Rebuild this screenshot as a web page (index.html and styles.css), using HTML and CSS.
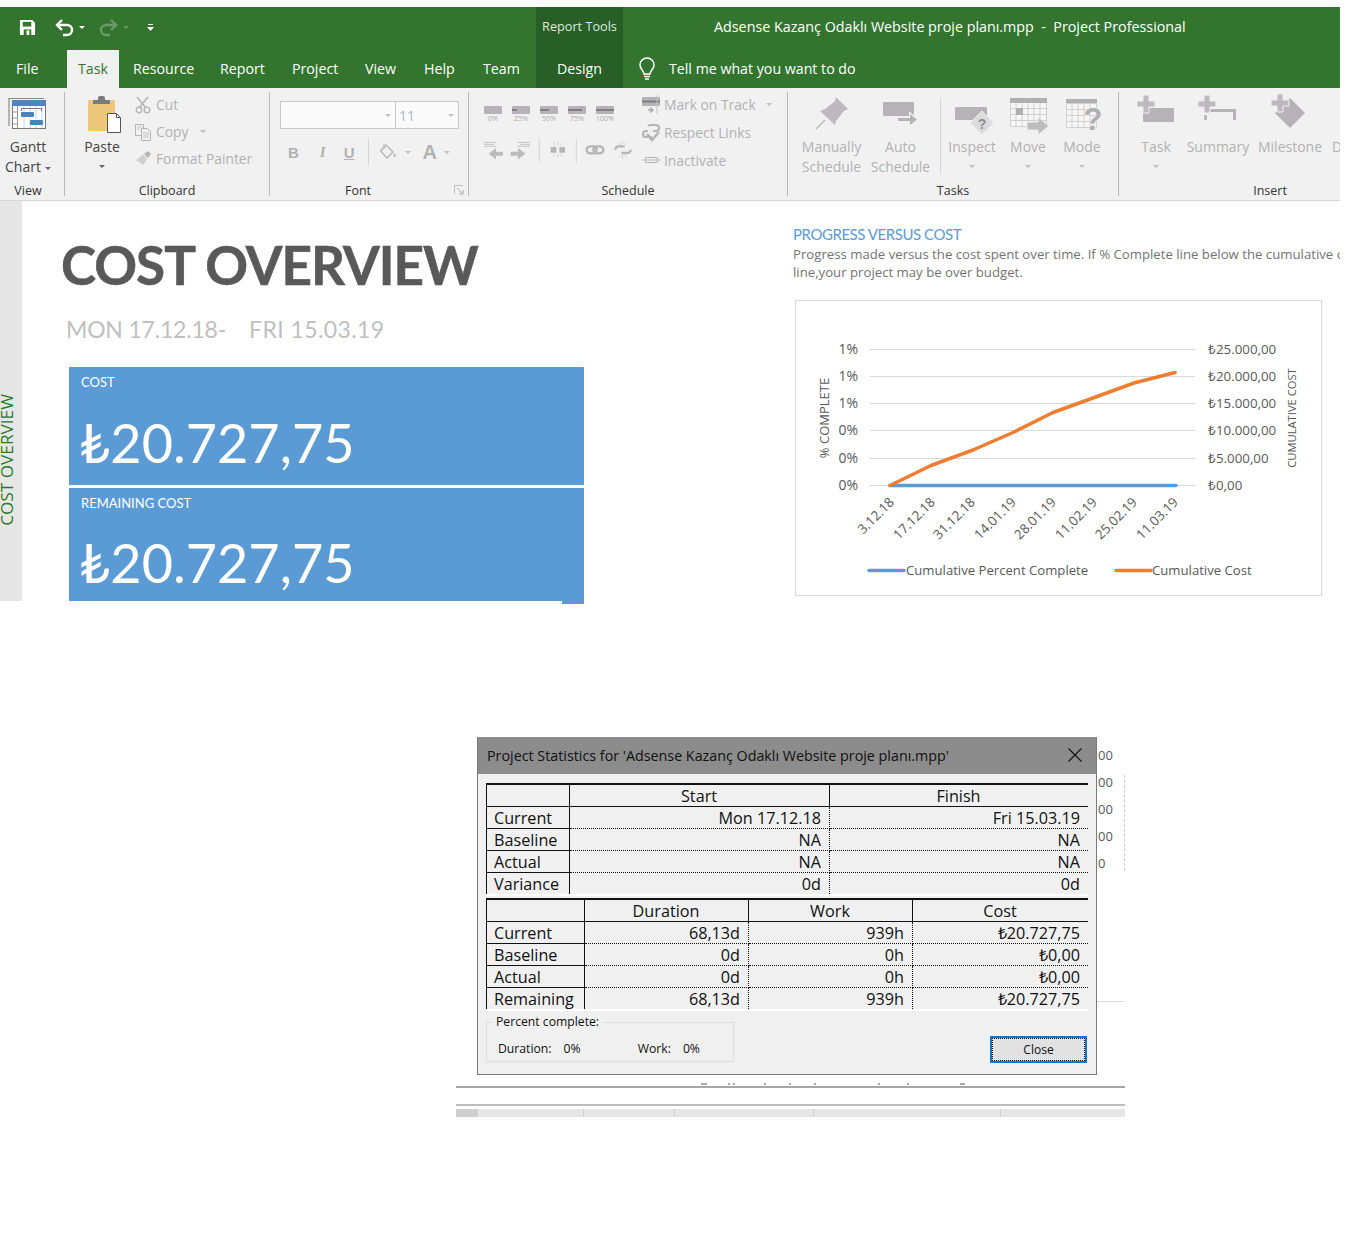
FILE: index.html
```html
<!DOCTYPE html>
<html lang="en">
<head>
  <meta charset="UTF-8">
  <title>Project Professional</title>
  <link rel="stylesheet" href="styles.css">
</head>
<body>

  <div class="app">
    <!-- title bar -->
    <div class="titlebar">
      <div class="qat">
        <svg class="qat-save" width="17" height="17" viewBox="0 0 18 18"><path d="M1 1h13l3 3v13H1z" fill="#fff"/><path d="M4 3h9v5H4z" fill="#33752f"/><path d="M5 11h8v6H5z" fill="#33752f"/><path d="M8 12h3v5H8z" fill="#fff"/></svg>
        <svg class="qat-undo" width="19" height="18" viewBox="0 0 19 18"><path d="M2 6h10a5 5 0 0 1 0 10H8" fill="none" stroke="#fff" stroke-width="2.4"/><path d="M7 1 2 6l5 5" fill="none" stroke="#fff" stroke-width="2.4"/></svg>
        <span class="caret caret-white qat-caret"></span>
        <svg class="qat-redo" width="19" height="18" viewBox="0 0 19 18"><path d="M17 6H7a5 5 0 0 0 0 10h4" fill="none" stroke="#6a9a67" stroke-width="2.4"/><path d="m12 1 5 5-5 5" fill="none" stroke="#6a9a67" stroke-width="2.4"/></svg>
        <span class="caret caret-dim qat-caret"></span>
        <svg class="qat-more" width="7" height="7" viewBox="0 0 7 7"><path d="M1 0h5v1H1zM0 3h7L3.500 7z" fill="#fff"/></svg>
      </div>
      <div class="context-label">Report Tools</div>
      <div class="doc-title">Adsense Kazanç Odaklı Website proje planı.mpp &nbsp;-&nbsp; Project Professional</div>
    </div>

    <!-- tabs -->
    <div class="tabs">
      <div class="tab tab-file">File</div>
      <div class="tab tab-active">Task</div>
      <div class="tab tab-resource">Resource</div>
      <div class="tab tab-report">Report</div>
      <div class="tab tab-project">Project</div>
      <div class="tab tab-view">View</div>
      <div class="tab tab-help">Help</div>
      <div class="tab tab-team">Team</div>
      <div class="tab tab-design">Design</div>
      <svg class="bulb" width="18" height="24" viewBox="0 0 18 24"><path d="M6 17c0-3-4-5-4-9a7 7 0 0 1 14 0c0 4-4 6-4 9z" fill="none" stroke="#fff" stroke-width="1.500"/><path d="M6 19.500h6M7 22h4" stroke="#fff" stroke-width="1.500"/></svg>
      <div class="tell-me">Tell me what you want to do</div>
    </div>

    <!-- ribbon -->
    <div class="ribbon">

      <div class="group group-view">
        <div class="group-body">
          <div class="big-btn btn-gantt">
            <svg class="big-icon" width="46" height="46" viewBox="0 0 46 46">
              <path d="M4 34V6.500h35" fill="none" stroke="#8a8a8a" stroke-width="1.200"/>
              <rect x="7.500" y="8.500" width="33" height="28" fill="#fff" stroke="#777" stroke-width="1"/>
              <rect x="7" y="8" width="34" height="6" fill="#5283bd"/>
              <path d="M12.500 14v22M8 20h4M8 26h4M8 32h4" stroke="#999" fill="none"/>
              <path d="M19 14v22M25 14v22M31 14v22M37 14v22" stroke="#c3d5ea" fill="none"/>
              <path d="M16.500 19v-2.500h20V19" fill="none" stroke="#777"/>
              <rect x="16" y="20" width="13" height="5" rx="1" fill="#4d7fb9"/>
              <rect x="25" y="28" width="13" height="5" rx="1" fill="#4d7fb9"/>
            </svg>
            <div class="big-text">Gantt</div>
            <div class="big-text">Chart<span class="caret caret-inline"></span></div>
          </div>
        </div>
        <div class="group-label">View</div>
      </div>

      <div class="group group-clipboard">
        <div class="group-body">
          <div class="big-btn btn-paste">
            <svg class="big-icon" width="46" height="46" viewBox="0 0 46 46">
              <rect x="9" y="8" width="27" height="31" rx="1" fill="#edc77b"/>
              <path d="M14 12V8h5V6a2 2 0 0 1 2-2h3a2 2 0 0 1 2 2v2h5v4z" fill="#7b7b7b"/>
              <path d="M28.500 21.500h9l4 4v15h-13z" fill="#fff" stroke="#555"/>
              <path d="M37.500 21.500v4h4" fill="none" stroke="#555"/>
            </svg>
            <div class="big-text">Paste</div>
            <span class="caret caret-under"></span>
          </div>
          <div class="small-col clip-col">
            <div class="small-item">
              <svg width="17" height="18" viewBox="0 0 17 18"><path d="M2 1l9 11M13 1 4 12" stroke="#b4b4b4" stroke-width="1.600"/><circle cx="4" cy="14" r="2.800" fill="none" stroke="#b4b4b4" stroke-width="1.300"/><circle cx="12" cy="14" r="2.800" fill="none" stroke="#b4b4b4" stroke-width="1.300"/></svg>
              <span>Cut</span>
            </div>
            <div class="small-item">
              <svg width="17" height="18" viewBox="0 0 17 18"><path d="M.500 1.500h8v11h-8z" fill="none" stroke="#b4b4b4"/><path d="M6.500 5.500h6l3 3v9h-9z" fill="#f1f1f1" stroke="#b4b4b4"/><path d="M8 10h6M8 12h6M8 14h6M2 4h5M2 6h3" stroke="#c4c4c4"/></svg>
              <span>Copy</span><span class="caret caret-dim-gray copy-caret"></span>
            </div>
            <div class="small-item">
              <svg width="17" height="18" viewBox="0 0 17 18"><path d="M9 4l4-3 3 3-3 4z" fill="#b4b4b4"/><path d="M8 4.500 12.500 9 8 15 1 10z" fill="#cfcfcf"/></svg>
              <span>Format Painter</span>
            </div>
          </div>
        </div>
        <div class="group-label">Clipboard</div>
      </div>

      <div class="group group-font">
        <div class="group-body font-body">
          <div class="font-combo">
            <div class="combo combo-name"><span class="caret caret-dim-gray"></span></div>
            <div class="combo combo-size"><span class="combo-value">11</span><span class="caret caret-dim-gray"></span></div>
          </div>
          <div class="font-tools">
            <span class="font-btn font-b">B</span>
            <span class="font-btn font-i">I</span>
            <span class="font-btn font-u">U</span>
            <span class="tool-sep"></span>
            <svg class="font-fill" width="18" height="18" viewBox="0 0 18 18"><path d="M7 2 1.500 8 8 15l6-6z" fill="none" stroke="#b4b4b4" stroke-width="1.300"/><path d="M5 1v5" stroke="#b4b4b4"/><path d="M15.500 10c1 1.500 1.500 2.500 1 3.500s-2 .5-2-.5.500-2 1-3z" fill="#b4b4b4"/></svg>
            <span class="caret caret-dim-gray fill-caret"></span>
            <span class="font-btn font-a">A</span>
            <span class="caret caret-dim-gray a-caret"></span>
          </div>
        </div>
        <div class="group-label label-font">Font</div>
        <svg class="launcher" width="10" height="10" viewBox="0 0 10 10"><path d="M.500 9V.500H9" fill="none" stroke="#c0c0c0"/><path d="m3 3 5.500 5.500M9 5v4H5" fill="none" stroke="#b0b0b0"/></svg>
      </div>

      <div class="group group-schedule">
        <div class="group-body">
          <div class="sched-left">
            <div class="pct-row">
              <div class="pct"><svg width="18" height="8" viewBox="0 0 18 8"><rect width="18" height="8" rx="1" fill="#b5b3b5"/></svg><span>0%</span></div>
              <div class="pct"><svg width="18" height="8" viewBox="0 0 18 8"><rect width="18" height="8" rx="1" fill="#b5b3b5"/><rect y="3" width="5" height="2" fill="#7f7f7f"/></svg><span>25%</span></div>
              <div class="pct"><svg width="18" height="8" viewBox="0 0 18 8"><rect width="18" height="8" rx="1" fill="#b5b3b5"/><rect y="3" width="9" height="2" fill="#7f7f7f"/></svg><span>50%</span></div>
              <div class="pct"><svg width="18" height="8" viewBox="0 0 18 8"><rect width="18" height="8" rx="1" fill="#b5b3b5"/><rect y="3" width="14" height="2" fill="#7f7f7f"/></svg><span>75%</span></div>
              <div class="pct"><svg width="18" height="8" viewBox="0 0 18 8"><rect width="18" height="8" rx="1" fill="#b5b3b5"/><rect y="3" width="18" height="2" fill="#7f7f7f"/></svg><span>100%</span></div>
            </div>
            <svg class="sched-tools" width="160" height="28" viewBox="0 140 480 84">
              <path d="M18 156h36M18 162h30M18 168h36" stroke="#c2c2c2" stroke-width="3"/>
              <path d="M75 184H54v-11l-22 17 22 17v-11h21z" fill="#bcbcbc"/>
              <path d="M118 156h38M126 162h30M118 168h38" stroke="#c2c2c2" stroke-width="3"/>
              <path d="M98 184h22v-11l22 17-22 17v-11H98z" fill="#bcbcbc"/>
              <path d="M184 145v72M295 145v72" stroke="#d4d4d4" stroke-width="3"/>
              <path d="M218 170h17v17h-17zM244 170h17v17h-17z" fill="#b5b5b5"/>
              <path d="M240 153v12M240 192v12M226 157l6 10M254 157l-6 10M226 200l6-10M254 200l-6-10" stroke="#c6c6c6" stroke-width="2"/>
              <rect x="326" y="168" width="30" height="21" rx="10.500" fill="none" stroke="#b5b5b5" stroke-width="7"/>
              <rect x="346" y="168" width="30" height="21" rx="10.500" fill="none" stroke="#b5b5b5" stroke-width="7"/>
              <path d="M412 178a10 10 0 0 1 10-10h18M458 178a10 10 0 0 1-10 10h-18" fill="none" stroke="#b5b5b5" stroke-width="7"/>
              <path d="M434 152v10M434 194v12M422 156l5 8M446 156l-5 8M422 202l5-8M446 202l-5-8" stroke="#c6c6c6" stroke-width="2"/>
            </svg>
          </div>
          <div class="small-col sched-col">
            <div class="small-item">
              <svg width="19" height="19" viewBox="0 0 19 19"><rect y="2" width="18" height="9" rx="1" fill="#b5b3b5"/><rect y="5.500" width="18" height="2" fill="#7f7f7f"/><path d="M6 15h5M8 12.500l3 2.500-3 2.500" fill="none" stroke="#a8a8a8" stroke-width="1.400"/><path d="M15 0v19" stroke="#c4c4c4"/></svg>
              <span>Mark on Track</span><span class="caret caret-dim-gray mark-caret"></span>
            </div>
            <div class="small-item">
              <svg width="19" height="19" viewBox="0 0 19 19"><path d="M7 7H5a3 3 0 0 0 0 6h6M12 7h3a3 3 0 0 0 0-6H9a3 3 0 0 0-2 1" fill="none" stroke="#b5b5b5" stroke-width="2.200" transform="translate(-1 1)"/><path d="m5 11 5 6 7-8" fill="none" stroke="#b5b5b5" stroke-width="2.600"/></svg>
              <span>Respect Links</span>
            </div>
            <div class="small-item">
              <svg width="19" height="19" viewBox="0 0 19 19"><path d="M3.500 6.500h12v5h-12zM0 9h19" fill="none" stroke="#b5b5b5"/></svg>
              <span>Inactivate</span>
            </div>
          </div>
        </div>
        <div class="group-label">Schedule</div>
      </div>

      <div class="group group-tasks">
        <div class="group-body">
          <div class="big-btn btn-manual">
            <svg class="big-icon" width="46" height="46" viewBox="0 0 46 46">
              <path d="M27 5 39 17l-4 2-8 10-1 4L11 19l5-2 10-8z" fill="#bcbabc"/>
              <path d="M16 28 7 37" stroke="#bcbabc" stroke-width="1.500"/>
            </svg>
            <div class="big-text">Manually</div>
            <div class="big-text">Schedule</div>
          </div>
          <div class="big-btn btn-auto">
            <svg class="big-icon" width="46" height="46" viewBox="0 0 46 46">
              <rect x="5" y="10" width="31" height="14" rx="1" fill="#b5b3b5"/>
              <path d="M20 24h11v-5l9 8-9 7v-4H20z" fill="#f1f1f1"/>
              <path d="M20 26h12v-4l7 5.500-7 5.500v-4H20z" fill="#b5b5b5"/>
            </svg>
            <div class="big-text">Auto</div>
            <div class="big-text">Schedule</div>
          </div>
          <span class="inner-sep"></span>
          <div class="big-btn btn-inspect">
            <svg class="big-icon" width="46" height="46" viewBox="0 0 46 46">
              <rect x="6" y="15" width="32" height="13" rx="1" fill="#b5b3b5"/>
              <path d="m33 19 12 12-12 12-12-12z" fill="#dcdcdc" stroke="#f1f1f1"/>
              <text class="icon-q" x="33" y="37" text-anchor="middle">?</text>
            </svg>
            <div class="big-text">Inspect</div>
            <span class="caret caret-dim-gray caret-under"></span>
          </div>
          <div class="big-btn btn-move">
            <svg class="big-icon" width="46" height="46" viewBox="0 0 46 46">
              <path d="M5.500 10.500h36v24h-36zM11 10v25M17 10v25M23 10v25M29 10v25M35 10v25M5 16.500h37M5 22.500h37M5 28.500h37" fill="#f7f7f7" stroke="#cfcfcf"/>
              <rect x="5" y="6" width="37" height="5" fill="#b0b0b0"/>
              <rect x="11" y="16" width="7" height="7" fill="#b0b0b0"/>
              <path d="M22 30h11v-5l11 9-11 9v-5H22z" fill="#bcbcbc" stroke="#f1f1f1"/>
            </svg>
            <div class="big-text">Move</div>
            <span class="caret caret-dim-gray caret-under"></span>
          </div>
          <div class="big-btn btn-mode">
            <svg class="big-icon" width="46" height="46" viewBox="0 0 46 46">
              <path d="M7.500 11.500h30v24h-30zM13 11v25M19 11v25M25 11v25M31 11v25M7 17.500h31M7 23.500h31M7 29.500h31" fill="#f7f7f7" stroke="#cfcfcf"/>
              <rect x="7" y="7" width="31" height="4" fill="#b0b0b0"/>
              <text class="icon-q-big" x="34" y="38" text-anchor="middle">?</text>
            </svg>
            <div class="big-text">Mode</div>
            <span class="caret caret-dim-gray caret-under"></span>
          </div>
        </div>
        <div class="group-label">Tasks</div>
      </div>

      <div class="group group-insert">
        <div class="group-body">
          <div class="big-btn btn-task">
            <svg class="big-icon" width="46" height="46" viewBox="0 0 46 46">
              <rect x="10" y="16" width="31" height="14" rx="1" fill="#b5b3b5"/>
              <path d="M10 4h6v6h6v6h-6v6h-6v-6H4v-6h6z" fill="#bcbabc" stroke="#f1f1f1" transform="translate(0 -1)"/>
            </svg>
            <div class="big-text">Task</div>
            <span class="caret caret-dim-gray caret-under"></span>
          </div>
          <div class="big-btn btn-summary">
            <svg class="big-icon" width="46" height="46" viewBox="0 0 46 46">
              <path d="M15 17h26v11h-3v-8H15z" fill="#b5b3b5"/>
              <rect x="9" y="23" width="3" height="5" fill="#bcbabc"/>
              <path d="M9 4h6v6h6v6h-6v6H9v-6H3v-6h6z" fill="#bcbabc" stroke="#f1f1f1" transform="translate(0 -1)"/>
            </svg>
            <div class="big-text">Summary</div>
          </div>
          <div class="big-btn btn-milestone">
            <svg class="big-icon" width="46" height="46" viewBox="0 0 46 46">
              <path d="m23 6 15 15-15 15L8 21z" fill="#b5b3b5"/>
              <path d="M10 2h6v6h6v6h-6v6h-6v-6H4V8h6z" fill="#bcbabc" stroke="#f1f1f1"/>
            </svg>
            <div class="big-text">Milestone</div>
          </div>
          <div class="big-btn btn-deadline">
            <div class="big-icon-gap"></div>
            <div class="big-text">Deadline</div>
          </div>
        </div>
        <div class="group-label">Insert</div>
      </div>

    </div>
  </div>

  <!-- report -->
  <div class="report">
    <div class="side-tab"><span>COST OVERVIEW</span></div>

    <div class="report-left">
      <h1 class="report-title">COST OVERVIEW</h1>
      <div class="report-dates"><span>MON 17.12.18-</span><span class="date-finish">FRI 15.03.19</span></div>
      <div class="card card-cost">
        <div class="card-label">COST</div>
        <div class="card-value">₺20.727,75</div>
      </div>
      <div class="card card-remaining">
        <div class="card-label">REMAINING COST</div>
        <div class="card-value">₺20.727,75</div>
      </div>
      <div class="card-notch"></div>
    </div>

    <div class="report-right">
      <div class="chart-title">PROGRESS VERSUS COST</div>
      <div class="chart-desc">Progress made versus the cost spent over time. If % Complete line below the cumulative cost<br>line,your project may be over budget.</div>
      <div class="chart-box">
        <svg class="chart" width="525" height="294" viewBox="796 301 525 294">
          <g class="grid">
            <path d="M870 349.500h325M870 376.500h325M870 403.500h325M870 430.500h325M870 458.500h325M870 485.500h325"/>
          </g>
          <g class="tick-left" text-anchor="end">
            <text x="858" y="354">1%</text>
            <text x="858" y="381">1%</text>
            <text x="858" y="408">1%</text>
            <text x="858" y="435">0%</text>
            <text x="858" y="463">0%</text>
            <text x="858" y="490">0%</text>
          </g>
          <g class="tick-right">
            <text x="1208" y="354">₺25.000,00</text>
            <text x="1208" y="381">₺20.000,00</text>
            <text x="1208" y="408">₺15.000,00</text>
            <text x="1208" y="435">₺10.000,00</text>
            <text x="1208" y="463">₺5.000,00</text>
            <text x="1208" y="490">₺0,00</text>
          </g>
          <text class="axis-title" transform="translate(829 418) rotate(-90)" text-anchor="middle">% COMPLETE</text>
          <text class="axis-title axis-right" transform="translate(1296 418) rotate(-90)" text-anchor="middle">CUMULATIVE COST</text>
          <g class="tick-date" text-anchor="end">
            <text transform="translate(895 503) rotate(-45)">3.12.18</text>
            <text transform="translate(936 503) rotate(-45)">17.12.18</text>
            <text transform="translate(976 503) rotate(-45)">31.12.18</text>
            <text transform="translate(1017 503) rotate(-45)">14.01.19</text>
            <text transform="translate(1057 503) rotate(-45)">28.01.19</text>
            <text transform="translate(1098 503) rotate(-45)">11.02.19</text>
            <text transform="translate(1138 503) rotate(-45)">25.02.19</text>
            <text transform="translate(1179 503) rotate(-45)">11.03.19</text>
          </g>
          <path class="line-blue" d="M890 485.500H1176"/>
          <path class="line-orange" d="M890 485.500 931 465.500 973 450 1013 432.500 1053 412.500 1093 398 1134 383 1175 372.500"/>
          <path class="line-blue" d="M869 570.500h35"/>
          <text class="legend" x="906" y="575">Cumulative Percent Complete</text>
          <path class="line-orange" d="M1116 570.500h35"/>
          <text class="legend" x="1152" y="575">Cumulative Cost</text>
        </svg>
      </div>
    </div>
  </div>

  <!-- statistics dialog over the report -->
  <div class="stats-area">
    <div class="stats-row">
      <div class="dialog">
        <div class="dialog-head">
          <span>Project Statistics for 'Adsense Kazanç Odaklı Website proje planı.mpp'</span>
          <svg width="14" height="14" viewBox="0 0 14 14"><path d="m.500.500 13 13m0-13-13 13" stroke="#111" stroke-width="1.100"/></svg>
        </div>
        <div class="dialog-body">
          <table class="stats stats-dates">
            <tr><th></th><th>Start</th><th>Finish</th></tr>
            <tr><td>Current</td><td>Mon 17.12.18</td><td>Fri 15.03.19</td></tr>
            <tr><td>Baseline</td><td>NA</td><td>NA</td></tr>
            <tr><td>Actual</td><td>NA</td><td>NA</td></tr>
            <tr><td>Variance</td><td>0d</td><td>0d</td></tr>
          </table>
          <table class="stats stats-totals">
            <tr><th></th><th>Duration</th><th>Work</th><th>Cost</th></tr>
            <tr><td>Current</td><td>68,13d</td><td>939h</td><td>₺20.727,75</td></tr>
            <tr><td>Baseline</td><td>0d</td><td>0h</td><td>₺0,00</td></tr>
            <tr><td>Actual</td><td>0d</td><td>0h</td><td>₺0,00</td></tr>
            <tr><td>Remaining</td><td>68,13d</td><td>939h</td><td>₺20.727,75</td></tr>
          </table>
          <div class="dialog-foot">
            <fieldset class="percent">
              <legend>Percent complete:</legend>
              <span class="percent-dur">Duration:</span><span class="percent-val">0%</span>
              <span class="percent-work">Work:</span><span class="percent-val">0%</span>
            </fieldset>
            <button class="close-btn"><span>Close</span></button>
          </div>
        </div>
      </div>
      <div class="behind">
        <div class="behind-ticks">
          <div>00</div>
          <div>00</div>
          <div>00</div>
          <div>00</div>
          <div>0</div>
        </div>
        <div class="behind-axis"></div>
        <div class="behind-line"></div>
      </div>
    </div>
    <svg class="frag" width="669" height="3" viewBox="456 1083 669 3"><path d="M701 1084h6M728 1084h2M733 1084h2M764 1084h2M789 1084h2M814 1084h2M878 1084h2M907 1084h2M960 1084h5" stroke="#555"/></svg>
    <div class="strip-line"></div>
    <div class="strip-bottom">
      <div class="strip-cell cell-first"></div>
      <div class="strip-cell cell-a"></div>
      <div class="strip-cell cell-b"></div>
      <div class="strip-cell cell-c"></div>
      <div class="strip-cell cell-d"></div>
      <div class="strip-cell cell-e"></div>
    </div>
  </div>

</body>
</html>
```
FILE: styles.css
```css
body {
  margin: 0;
  background-color: #fff;
  font-family: "Open Sans", "Liberation Sans", sans-serif;
  overflow-x: hidden;
}

.app {
  width: 1340px;
  margin-top: 7px;
}

/* title bar */
.titlebar {
  display: flex;
  height: 43px;
  background-color: #33752f;
  color: #fff;
}

.qat {
  display: flex;
  align-items: center;
  width: 536px;
  padding: 0 0 2px 19px;
  box-sizing: border-box;
}

.qat-undo { margin-left: 19px; }
.qat-caret { margin-left: 5px; }
.qat-redo { margin-left: 14px; }
.qat-more { margin-left: 18px; }

.context-label {
  width: 87px;
  padding-top: 10px;
  box-sizing: border-box;
  background-color: #285f26;
  font-size: 12.7px;
  text-align: center;
  color: #dfe9de;
}

.doc-title {
  padding: 10px 0 0 91px;
  font-size: 14.3px;
  white-space: nowrap;
}

.caret {
  display: inline-block;
  width: 0;
  height: 0;
  border-left: 3.5px solid transparent;
  border-right: 3.5px solid transparent;
  border-top: 3.5px solid #666;
}

.caret-white { border-top-color: #fff; }
.caret-dim { border-top-color: #6a9a67; }
.caret-dim-gray { border-top-color: #c0c0c0; }

/* tabs */
.tabs {
  display: flex;
  align-items: stretch;
  height: 38px;
  background-color: #33752f;
  color: #fff;
  font-size: 14.2px;
  line-height: 37px;
}

.tab { white-space: nowrap; }
.tab-file { width: 67px; padding-left: 16px; box-sizing: border-box; }
.tab-active { width: 52px; background-color: #f1f1f1; color: #33752f; text-align: center; }
.tab-resource { width: 101px; padding-left: 14px; box-sizing: border-box; }
.tab-report { width: 72px; }
.tab-project { width: 73px; }
.tab-view { width: 59px; }
.tab-help { width: 59px; }
.tab-team { width: 53px; }
.tab-design { width: 87px; background-color: #285f26; text-align: center; }
.bulb { margin: 7px 0 0 15px; }
.tell-me { margin-left: 13px; }

/* ribbon */
.ribbon {
  display: flex;
  height: 108px;
  padding-top: 4px;
  background-color: #f1f1f1;
  border-bottom: 1px solid #d4d4d4;
  overflow: hidden;
  font-size: 14px;
  color: #444;
}

.group {
  position: relative;
  display: flex;
  flex-direction: column;
  flex-shrink: 0;
  height: 104px;
  box-sizing: border-box;
  border-right: 1px solid #b9b9b9;
}

.group-view { width: 65px; }
.group-clipboard { width: 205px; }
.group-font { width: 199px; }
.group-schedule { width: 319px; }
.group-tasks { width: 331px; }
.group-insert { width: 302px; border-right: none; }

.group-body {
  display: flex;
  flex-shrink: 0;
  height: 88px;
}

.group-label {
  flex-shrink: 0;
  font-size: 12.5px;
  line-height: 22px;
  text-align: center;
  color: #333;
}

.group-view .group-label { padding-right: 8px; }
.label-font { padding-right: 22px; }

.launcher {
  position: absolute;
  right: 4px;
  bottom: 1px;
}

.big-btn {
  display: flex;
  flex-direction: column;
  align-items: center;
  flex-shrink: 0;
  text-align: center;
  color: #b1b1b1;
  white-space: nowrap;
}

.big-icon { display: block; flex-shrink: 0; margin-bottom: -1px; }
.big-icon-gap { height: 45px; }
.big-text { line-height: 20px; }

.btn-gantt { width: 56px; color: #444; }
.btn-paste { width: 46px; margin-left: 14px; color: #444; }
.caret-inline { margin-left: 4px; vertical-align: 2px; }
.caret-under { margin-top: 8px; }

.btn-manual { width: 69px; margin-left: 9px; }
.btn-auto { width: 69px; }
.inner-sep {
  width: 1px;
  height: 76px;
  margin: 6px 0 0 5px;
  background-color: #d4d4d4;
}
.btn-inspect { width: 62px; }
.btn-move { width: 50px; }
.btn-mode { width: 58px; }

.btn-task { width: 42px; margin-left: 16px; }
.btn-summary { width: 62px; margin-left: 10px; }
.btn-milestone { width: 64px; margin-left: 9px; }
.btn-deadline { width: 60px; margin-left: 10px; align-items: flex-start; }

/* small buttons */
.small-col {
  display: flex;
  flex-direction: column;
  color: #b1b1b1;
  font-size: 13.8px;
  white-space: nowrap;
}

.clip-col { margin: -1px 0 0 10px; }
.sched-col { margin: -2px 0 0 4px; }

.small-item {
  display: flex;
  align-items: center;
  height: 27px;
}

.sched-col .small-item { height: 28px; gap: 3px; }
.clip-col .small-item { gap: 4px; }
.copy-caret { margin-left: 8px; }
.mark-caret { margin-left: 7px; }

/* font group */
.font-body {
  flex-direction: column;
  padding: 9px 0 0 10px;
  box-sizing: border-box;
}

.font-combo { display: flex; }

.combo {
  display: flex;
  align-items: center;
  justify-content: flex-end;
  height: 28px;
  box-sizing: border-box;
  padding-right: 4px;
  background-color: #fafafa;
  border: 1px solid #c8c8c8;
}

.combo-name { width: 116px; }
.combo-size { width: 63px; border-left: none; justify-content: space-between; }
.combo-value { padding-left: 3px; color: #a9b6c2; }

.font-tools {
  display: flex;
  align-items: center;
  height: 28px;
  margin-top: 9px;
  color: #b1b1b1;
}

.font-btn { font-size: 15px; font-weight: bold; font-family: "Liberation Sans", sans-serif; }
.font-b { margin-left: 8px; }
.font-i { margin-left: 21px; font-style: italic; font-family: "Liberation Serif", serif; }
.font-u { margin-left: 18px; text-decoration: underline; }
.tool-sep { width: 1px; height: 26px; margin-left: 13px; background-color: #d4d4d4; }
.font-fill { margin-left: 10px; }
.fill-caret { margin-left: 8px; }
.font-a { margin-left: 12px; font-size: 20px; }
.a-caret { margin-left: 7px; }

/* schedule group */
.sched-left {
  width: 160px;
  margin-left: 9px;
}

.pct-row {
  display: flex;
  gap: 10px;
  padding: 14px 0 0 6px;
}

.pct {
  display: flex;
  flex-direction: column;
  align-items: center;
  width: 18px;
  font-size: 7px;
  line-height: 10px;
  color: #a8a8a8;
}

.sched-tools { display: block; margin-top: 13px; }

/* report */
.report {
  display: flex;
  width: 1340px;
  height: 400px;
}

.side-tab {
  display: flex;
  align-items: flex-end;
  justify-content: center;
  width: 22px;
  flex-shrink: 0;
  box-sizing: border-box;
  padding: 0 9px 75px 0;
  background-color: #e6e6e6;
}

.side-tab span {
  writing-mode: vertical-rl;
  transform: rotate(180deg);
  font-size: 17.2px;
  line-height: 14px;
  white-space: nowrap;
  color: #2a7a2a;
}

.report-left {
  width: 771px;
  flex-shrink: 0;
}

.report-title {
  margin: 34px 0 0 39px;
  font-family: Lato, "Liberation Sans", sans-serif;
  font-size: 53px;
  font-weight: bold;
  letter-spacing: -1px;
  -webkit-text-stroke: 0.6px #595959;
  line-height: 60px;
  color: #595959;
}

.report-dates {
  display: flex;
  gap: 23px;
  margin: 19px 0 0 44px;
  font-family: Lato, "Liberation Sans", sans-serif;
  font-size: 23px;
  letter-spacing: -0.2px;
  line-height: 30px;
  color: #bfbfbf;
}

.date-finish { letter-spacing: 0.4px; }

.card {
  width: 515px;
  margin-left: 47px;
  box-sizing: border-box;
  padding: 8px 12px;
  background-color: #5b9bd5;
  color: #fff;
  font-family: Lato, "Liberation Sans", sans-serif;
}

.card-cost { height: 118px; margin-top: 23px; }
.card-remaining { height: 113px; margin-top: 3px; }

.card-label {
  font-size: 13px;
  line-height: 15px;
}

.card-value {
  margin: 21px 0 0 -2px;
  font-size: 54px;
  line-height: 64px;
}

.card-remaining .card-value { margin-top: 20px; }

.card-notch {
  width: 22px;
  height: 3px;
  margin-left: 540px;
  background-color: #5b9bd5;
}

.report-right {
  width: 547px;
  overflow: hidden;
}

.chart-title {
  margin-top: 23px;
  font-family: Lato, "Liberation Sans", sans-serif;
  font-size: 15px;
  letter-spacing: -0.45px;
  line-height: 21px;
  color: #5b9bd5;
}

.chart-desc {
  font-size: 13.2px;
  line-height: 18px;
  white-space: nowrap;
  color: #737373;
}

.chart-box {
  width: 527px;
  height: 296px;
  margin: 19px 0 0 2px;
  box-sizing: border-box;
  border: 1px solid #d9d9d9;
}

.chart { display: block; font-family: "Open Sans", sans-serif; font-size: 13.3px; fill: #595959; }
.grid path { fill: none; stroke: #d9d9d9; stroke-width: 1; }
.tick-left text { font-size: 14px; }
.tick-date text { font-size: 13.3px; }
.legend { font-size: 13.15px; }
.axis-title { font-size: 13px; }
.axis-right { font-size: 11.2px; }
.line-blue { fill: none; stroke: #5b9bd5; stroke-width: 3.5; stroke-linecap: round; }
.line-orange { fill: none; stroke: #ed7d31; stroke-width: 3.5; stroke-linecap: round; stroke-linejoin: round; }

/* statistics dialog */
.stats-area {
  width: 669px;
  margin: 136px 0 0 456px;
}

.stats-row { display: flex; }

.dialog {
  width: 620px;
  height: 338px;
  margin-left: 21px;
  flex-shrink: 0;
  box-sizing: border-box;
  border: 1px solid #7a7a7a;
  border-top: none;
  background-color: #f0f0f0;
}

.dialog-head {
  display: flex;
  align-items: center;
  justify-content: space-between;
  height: 37px;
  padding: 0 14px 1px 9px;
  box-sizing: border-box;
  background-color: #8c8c8c;
  font-size: 14.3px;
  color: #111;
}

.dialog-body { padding: 9px 8px 0 8px; }

.stats {
  width: 602px;
  table-layout: fixed;
  border-collapse: collapse;
  border-top: 2px solid #111;
  border-bottom: 2px solid #fff;
  font-size: 16.2px;
  color: #111;
}

.stats tr { height: 22px; }

.stats th,
.stats td {
  height: 22px;
  padding: 2px 8px 0 7px;
  box-sizing: border-box;
  overflow: hidden;
  line-height: 19px;
  white-space: nowrap;
  border-right: 1px dotted #111;
  border-bottom: 1px dotted #111;
  text-align: right;
}

.stats th {
  font-weight: normal;
  text-align: center;
  border-right: 1px solid #111;
  border-bottom: 1px solid #111;
}

.stats th:last-child,
.stats td:last-child { border-right: none; }

.stats td:first-child {
  text-align: left;
  border-left: 1px solid #111;
  border-right: 1px solid #111;
  border-bottom: 1px solid #111;
}

.stats th:first-child { border-left: 1px solid #111; }
.stats tr:last-child td { border-bottom: none; }

.stats-dates th:first-child { width: 83px; }
.stats-dates th:nth-child(2) { width: 260px; }
.stats-totals th:first-child { width: 98px; }
.stats-totals th:nth-child(2),
.stats-totals th:nth-child(3) { width: 164px; }

.stats-totals { margin-top: 2px; }

.dialog-foot {
  display: flex;
  justify-content: space-between;
  align-items: flex-end;
  margin-top: 3px;
  padding-right: 1px;
}

.percent {
  width: 248px;
  height: 48px;
  margin: 0;
  padding: 4px 0 0 11px;
  box-sizing: border-box;
  border: 1px solid #dcdcdc;
  font-size: 12.2px;
  line-height: 30px;
  color: #111;
}

.percent legend {
  padding: 0 3px;
  margin-left: -5px;
  line-height: 16px;
}

.percent-val { margin-left: 12px; }
.percent-work { margin-left: 54px; }

.close-btn {
  width: 97px;
  height: 27px;
  margin: 0 0 -1px;
  padding: 0;
  box-sizing: border-box;
  background-color: #e1e1e1;
  border: 2px solid #0078d7;
  font-family: "Open Sans", sans-serif;
  font-size: 12px;
  color: #111;
}

.close-btn span {
  display: block;
  box-sizing: border-box;
  height: 23px;
  line-height: 22px;
  border: 1px dotted #111;
}

/* what shows behind the dialog */
.behind {
  position: relative;
  width: 28px;
  flex-shrink: 0;
  overflow: hidden;
}

.behind-ticks {
  padding: 5px 0 0 1px;
  font-size: 13px;
  line-height: 27px;
  color: #595959;
}

.behind-axis {
  position: absolute;
  top: 38px;
  right: 0;
  width: 1px;
  height: 96px;
  border-right: 1px dashed #c8c8c8;
}

.behind-line {
  position: absolute;
  top: 264px;
  left: 0;
  width: 28px;
  height: 1px;
  background-color: #dcdcdc;
}

.frag { display: block; margin-top: 8px; }

.strip-line {
  height: 2px;
  background-color: #a6a6a6;
}

.strip-bottom {
  display: flex;
  height: 8px;
  margin-top: 16px;
  border-top: 2px solid #bdbdbd;
  padding-top: 3px;
  background-color: #fff;
}

.strip-cell {
  height: 8px;
  background-color: #e6e6e6;
  border-right: 1px solid #d0d0d0;
  box-sizing: border-box;
}

.cell-first { width: 22px; background-color: #cfcfcf; border-right: none; }
.cell-a { width: 106px; }
.cell-b { width: 91px; }
.cell-c { width: 139px; }
.cell-d { width: 187px; }
.cell-e { flex: 1; border-right: none; }

.icon-q { font-size: 14px; font-weight: bold; fill: #8c8c8c; font-family: "Liberation Sans", sans-serif; }
.icon-q-big { font-size: 31px; font-weight: bold; fill: #b0b0b0; stroke: #f1f1f1; stroke-width: 1.5; paint-order: stroke; font-family: "Liberation Sans", sans-serif; }
```
